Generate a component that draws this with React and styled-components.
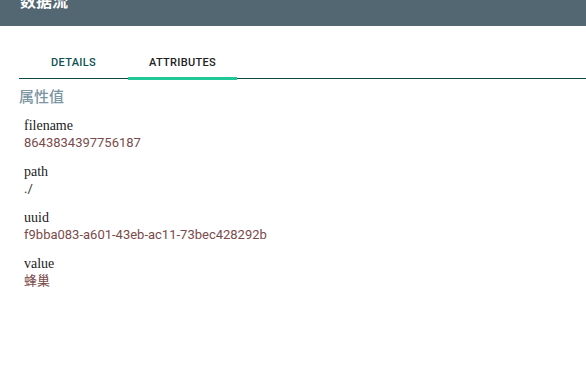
import React from 'react';
import styled, { createGlobalStyle } from 'styled-components';

const GlobalStyle = createGlobalStyle`
  html, body {
    margin: 0;
    padding: 0;
    background: #fff;
  }
  body {
    font-family: Roboto, "Noto Sans CJK SC", sans-serif;
  }
`;

const attributes = [
  { name: 'filename', value: '8643834397756187' },
  { name: 'path', value: './', plain: true },
  { name: 'uuid', value: 'f9bba083-a601-43eb-ac11-73bec428292b' },
  { name: 'value', value: '蜂巢' },
];

export default function App() {
  return (
    <Page>
      <GlobalStyle />
      <Header>
        <Title>数据流</Title>
      </Header>
      <Body>
        <Tabs>
          <Tab>DETAILS</Tab>
          <Tab active>ATTRIBUTES</Tab>
        </Tabs>
        <SectionTitle>属性值</SectionTitle>
        <List>
          {attributes.map(attr => (
            <Item key={attr.name}>
              <Label>{attr.name}</Label>
              <Value plain={attr.plain}>{attr.value}</Value>
            </Item>
          ))}
        </List>
      </Body>
    </Page>
  );
}

const Page = styled.div`
  width: 586px;
  height: 377px;
  overflow: hidden;
  background: #fff;
`;

const Header = styled.div`
  height: 26px;
  background: #526772;
  overflow: hidden;
  display: flex;
  align-items: flex-end;
  padding-left: 20px;
`;

const Title = styled.div`
  color: #fff;
  font-size: 16px;
  font-weight: 700;
  line-height: 20px;
  margin-bottom: 16px;
  font-family: "Noto Sans CJK SC", sans-serif;
`;

const Body = styled.div`
  padding-left: 19px;
`;

const Tabs = styled.div`
  display: flex;
  margin-top: 20px;
  border-bottom: 1px solid #0e4a4c;
`;

const Tab = styled.div`
  position: relative;
  width: 109px;
  height: 32px;
  display: flex;
  align-items: center;
  justify-content: center;
  font-size: 11px;
  font-weight: 500;
  letter-spacing: 0.3px;
  color: ${p => (p.active ? '#222' : '#0e5252')};
  &::after {
    content: '';
    display: ${p => (p.active ? 'block' : 'none')};
    position: absolute;
    left: 0;
    right: 0;
    bottom: -2px;
    height: 3px;
    background: #20c997;
  }
`;

const SectionTitle = styled.div`
  margin-top: 7px;
  font-size: 15px;
  font-weight: 500;
  line-height: 20px;
  color: #7b95a3;
  font-family: "Noto Sans CJK SC", sans-serif;
`;

const List = styled.div`
  display: flex;
  flex-direction: column;
  gap: 12px;
  padding-left: 5px;
  margin-top: 11px;
`;

const Item = styled.div`
  display: flex;
  flex-direction: column;
`;

const Label = styled.div`
  font-family: "Liberation Serif", serif;
  font-size: 14px;
  line-height: 17px;
  color: #222;
`;

const Value = styled.div`
  font-family: Roboto, "Noto Sans CJK SC", sans-serif;
  font-size: 13px;
  line-height: 17px;
  color: ${p => (p.plain ? '#333' : '#7a4b4b')};
`;
